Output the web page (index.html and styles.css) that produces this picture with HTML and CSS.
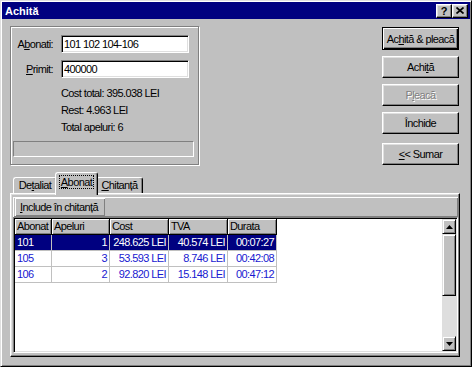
FILE: index.html
```html
<!DOCTYPE html>
<html lang="ro">
<head>
    <meta charset="UTF-8">
    <title>Achită</title>
    <link rel="stylesheet" href="styles.css">
</head>
<body>
    <div class="window">
        <div class="titlebar">
            <span class="title">Achită</span>
            <div class="caption-btns">
                <span class="cap-btn help">?</span>
                <span class="cap-btn close">
                    <svg width="8" height="7" viewBox="0 0 8 7"><path d="M0.5 0.5L7.5 6.5M7.5 0.5L0.5 6.5" stroke="#000" stroke-width="1.7"/></svg>
                </span>
            </div>
        </div>

        <div class="top">
            <div class="info">
                <div class="field">
                    <label for="abonati">A<u>b</u>onati:</label>
                    <input id="abonati" type="text" value="101 102 104-106">
                </div>
                <div class="field">
                    <label for="primit"><u>P</u>rimit:</label>
                    <input id="primit" type="text" value="400000">
                </div>
                <div class="stats">
                    <div>Cost total: 395.038 LEI</div>
                    <div>Rest: 4.963 LEI</div>
                    <div>Total apeluri: 6</div>
                </div>
                <div class="progress"></div>
            </div>

            <div class="actions">
                <button class="btn default">Ac<u>h</u>ită &amp; pleacă</button>
                <button class="btn">Achi<u>t</u>ă</button>
                <button class="btn disabled">P<u>l</u>eacă</button>
                <button class="btn">Închide</button>
                <button class="btn sumar"><u>&lt;</u>&lt; Sumar</button>
            </div>
        </div>

        <div class="tabs-area">
            <div class="tabs">
                <div class="tab t-detaliat">De<u>t</u>aliat</div>
                <div class="tab t-abonat active"><span class="focus"><u>A</u>bonat</span></div>
                <div class="tab t-chitanta"><u>C</u>hitanță</div>
            </div>
            <div class="tab-panel">
                <div class="toolbar">
                    <button class="tool-btn"><u>I</u>nclude în chitanță</button>
                </div>
                <div class="grid">
                    <div class="grid-body">
                        <table>
                            <colgroup>
                                <col style="width: 37px">
                                <col style="width: 58px">
                                <col style="width: 59px">
                                <col style="width: 59px">
                                <col style="width: 49px">
                            </colgroup>
                            <thead>
                                <tr>
                                    <th>Abonat</th>
                                    <th>Apeluri</th>
                                    <th>Cost</th>
                                    <th>TVA</th>
                                    <th>Durata</th>
                                </tr>
                            </thead>
                            <tbody>
                                <tr class="selected">
                                    <td>101</td>
                                    <td class="num">1</td>
                                    <td class="num">248.625 LEI</td>
                                    <td class="num">40.574 LEI</td>
                                    <td class="num">00:07:27</td>
                                </tr>
                                <tr>
                                    <td>105</td>
                                    <td class="num">3</td>
                                    <td class="num">53.593 LEI</td>
                                    <td class="num">8.746 LEI</td>
                                    <td class="num">00:42:08</td>
                                </tr>
                                <tr>
                                    <td>106</td>
                                    <td class="num">2</td>
                                    <td class="num">92.820 LEI</td>
                                    <td class="num">15.148 LEI</td>
                                    <td class="num">00:47:12</td>
                                </tr>
                            </tbody>
                        </table>
                    </div>
                    <div class="scrollbar">
                        <div class="sb-btn">
                            <svg width="7" height="4" viewBox="0 0 7 4"><path d="M3.5 0L7 4H0z" fill="#000"/></svg>
                        </div>
                        <div class="sb-thumb"></div>
                        <div class="sb-track"></div>
                        <div class="sb-btn">
                            <svg width="7" height="4" viewBox="0 0 7 4"><path d="M0 0H7L3.5 4z" fill="#000"/></svg>
                        </div>
                    </div>
                </div>
            </div>
        </div>
    </div>
</body>
</html>
```

FILE: styles.css
```css
body {
    margin: 0;
    background: #c0c0c0;
    font-family: "Liberation Sans", Arial, sans-serif;
    font-size: 11px;
    letter-spacing: -0.6px;
    color: #000;
}
u {
    text-decoration: underline;
    text-underline-offset: 1px;
}
.window {
    width: 472px;
    height: 367px;
    box-sizing: border-box;
    padding: 1px;
    background: #c0c0c0;
    border: 1px solid;
    border-color: #dfdfdf #000 #000 #dfdfdf;
    box-shadow: inset 1px 1px #fff, inset -1px -1px #808080;
}

/* title bar */
.titlebar {
    height: 17px;
    background: #000080;
    display: flex;
    align-items: center;
    justify-content: space-between;
    padding: 0 2px 0 3px;
}
.title {
    color: #fff;
    font-weight: bold;
    letter-spacing: 0;
}
.caption-btns {
    display: flex;
}
.cap-btn {
    width: 16px;
    height: 14px;
    box-sizing: border-box;
    background: #c0c0c0;
    border: 1px solid;
    border-color: #fff #000 #000 #fff;
    box-shadow: inset -1px -1px #808080, inset 1px 1px #dfdfdf;
    display: flex;
    align-items: center;
    justify-content: center;
}
.cap-btn.help {
    font-weight: bold;
    font-size: 11px;
    letter-spacing: 0;
    line-height: 12px;
}

/* top part */
.top {
    display: flex;
    justify-content: space-between;
    padding: 7px 11px 0 8px;
}
.info {
    width: 189px;
    height: 139px;
    box-sizing: border-box;
    padding-top: 8px;
    border: 1px solid #808080;
    box-shadow: 1px 1px 0 #fff, inset 1px 1px 0 #fff;
}
.field {
    display: flex;
    align-items: center;
    gap: 8px;
    margin-bottom: 7px;
}
.field label {
    width: 42px;
    text-align: right;
}
.field input {
    width: 128px;
    height: 18px;
    box-sizing: border-box;
    margin: 0;
    padding: 0 2px;
    font: inherit;
    letter-spacing: inherit;
    background: #fff;
    border: 1px solid;
    border-color: #808080 #fff #fff #808080;
    box-shadow: inset 1px 1px #000, inset -1px -1px #dfdfdf;
    outline: none;
}
.stats {
    margin-top: 2px;
    padding-left: 50px;
    line-height: 17px;
}
.progress {
    width: 181px;
    height: 16px;
    box-sizing: border-box;
    margin: 5px 0 0 2px;
    border: 1px solid;
    border-color: #808080 #fff #fff #808080;
}

.actions {
    display: flex;
    flex-direction: column;
    gap: 6px;
    margin-top: 1px;
}
.btn {
    width: 77px;
    height: 22px;
    box-sizing: border-box;
    margin: 0;
    padding: 0;
    font: inherit;
    letter-spacing: inherit;
    color: #000;
    background: #c0c0c0;
    border: 1px solid;
    border-color: #fff #000 #000 #fff;
    box-shadow: inset -1px -1px #808080, inset 1px 1px #dfdfdf;
}
.btn.default {
    height: 23px;
    border-color: #000;
    box-shadow: inset 1px 1px #fff, inset -1px -1px #000, inset -2px -2px #808080;
}
.btn.disabled {
    color: #808080;
    text-shadow: 1px 1px 0 #fff;
}
.btn.sumar {
    margin-top: 3px;
}

/* tabs */
.tabs-area {
    padding: 7px 10px 0 8px;
}
.tabs {
    display: flex;
    align-items: flex-end;
    height: 21px;
    padding-left: 3px;
}
.tab {
    height: 16px;
    box-sizing: border-box;
    background: #c0c0c0;
    border: 1px solid;
    border-color: #fff #000 transparent #fff;
    border-bottom: none;
    border-radius: 3px 3px 0 0;
    box-shadow: inset -1px 0 #808080;
    text-align: center;
    line-height: 15px;
}
.t-detaliat { width: 44px; }
.t-abonat { width: 43px; }
.t-chitanta { width: 47px; }
.tab.active {
    position: relative;
    z-index: 1;
    height: 23px;
    margin: 0 -2px -2px;
    padding-top: 2px;
}
.focus {
    outline: 1px dotted #000;
    outline-offset: 0;
    padding: 0 1px;
}
.tab-panel {
    height: 164px;
    box-sizing: border-box;
    padding: 3px 1px 2px 2px;
    border: 1px solid;
    border-color: #fff #000 #000 #fff;
    box-shadow: inset -1px -1px #808080, inset 1px 1px #dfdfdf;
}
.toolbar {
    height: 20px;
    box-sizing: border-box;
    padding: 1px 2px;
    box-shadow: inset 1px 1px #fff, inset -1px -1px #808080;
}
.tool-btn {
    width: 90px;
    height: 18px;
    margin: 0;
    padding: 0 0 0 5px;
    text-align: left;
    font: inherit;
    letter-spacing: inherit;
    color: #000;
    background: #c0c0c0;
    border: none;
    box-shadow: inset 1px 1px #fff, inset -1px -1px #808080;
}

/* grid */
.grid {
    height: 136px;
    box-sizing: border-box;
    display: flex;
    padding: 1px;
    border: 1px solid;
    border-color: #808080 #fff #fff #808080;
    box-shadow: inset 1px 1px #000, inset -1px -1px #dfdfdf;
}
.grid-body {
    flex: 1;
    background: #fff;
    overflow: hidden;
}
table {
    table-layout: fixed;
    width: 262px;
    border-collapse: separate;
    border-spacing: 0;
}
th, td {
    padding: 0 2px;
    line-height: 15px;
    white-space: nowrap;
    overflow: hidden;
}
th {
    font-weight: normal;
    text-align: left;
    background: #c0c0c0;
    border-right: 1px solid #000;
    border-bottom: 1px solid #000;
    box-shadow: inset 1px 1px #fff, inset -1px -1px #808080;
}
td {
    color: #1818d0;
    border-right: 1px solid #c0c0c0;
    border-bottom: 1px solid #c0c0c0;
}
td.num {
    text-align: right;
}
tr.selected td {
    background: #000080;
    color: #fff;
}

.scrollbar {
    width: 14px;
    display: flex;
    flex-direction: column;
}
.sb-btn, .sb-thumb {
    box-sizing: border-box;
    background: #c0c0c0;
    border: 1px solid;
    border-color: #dfdfdf #000 #000 #dfdfdf;
    box-shadow: inset 1px 1px #fff, inset -1px -1px #808080;
}
.sb-btn {
    height: 15px;
    display: flex;
    align-items: center;
    justify-content: center;
}
.sb-thumb {
    height: 62px;
}
.sb-track {
    flex: 1;
    background: #dedede;
}
```
